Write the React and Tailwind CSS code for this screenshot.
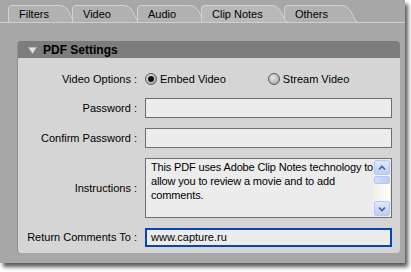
import React from 'react';

const tabs = [
  { label: 'Filters', left: 8, width: 68 },
  { label: 'Video', left: 72, width: 68 },
  { label: 'Audio', left: 137, width: 69 },
  { label: 'Clip Notes', left: 201, width: 87, active: true },
  { label: 'Others', left: 284, width: 74 },
];

function Tab({ label, width, active }) {
  const h = 17;
  const d = `M0.5,${h} L0.5,4 Q0.5,0.5 4,0.5 L${width - 16},0.5 Q${width - 11},0.5 ${width - 8},5 L${width - 3},${h - 2} Q${width - 1.5},${h} ${width},${h}`;
  return (
    <div className="relative h-[17px] shrink-0" style={{ width }}>
      <svg className="absolute inset-0" width={width} height={h + 1}>
        <path d={d + ` L0.5,${h} Z`} fill={active ? '#b9b9b9' : '#b1b1b1'} stroke="none" />
        <path d={d} fill="none" stroke="#d2d2d2" strokeWidth="1" />
      </svg>
      <span className="relative block pl-[11px] pt-[2px] text-[11px] leading-[14px] text-black">{label}</span>
    </div>
  );
}

function Radio({ checked }) {
  return (
    <span className="w-[12px] h-[12px] rounded-full border border-[#5a5a5a] bg-[radial-gradient(circle_at_40%_35%,#e8e8e8,#9a9a9a)] flex items-center justify-center">
      {checked && <span className="w-[6px] h-[6px] rounded-full bg-[#111]" />}
    </span>
  );
}

function Field({ label, children, className = '' }) {
  return (
    <div className={`flex items-center ${className}`}>
      <div className="w-[120px] text-right pr-[1px] text-[11px] text-black">{label}</div>
      <div className="ml-[7px] w-[247px] flex items-center">{children}</div>
    </div>
  );
}

export default function App() {
  return (
    <div className="w-[411px] h-[272px] bg-white" style={{ fontFamily: '"Liberation Sans", Arial, sans-serif' }}>
      <div className="relative w-[405px] h-[263px] bg-[#a7a7a7] shadow-[3px_4px_4px_rgba(0,0,0,0.65)]">
        <div className="relative h-[22px] pt-[5px]">
          {tabs.filter(t => !t.active).map(t => (
            <div key={t.label} className="absolute top-[5px]" style={{ left: t.left }}>
              <Tab {...t} />
            </div>
          ))}
          {tabs.filter(t => t.active).map(t => (
            <div key={t.label} className="absolute top-[5px]" style={{ left: t.left }}>
              <Tab {...t} />
            </div>
          ))}
        </div>
        <div className="h-px bg-[#cfcfcf]" />

        <div className="ml-[17px] mr-[5px] mt-[18px] rounded-[4px] overflow-hidden border-l border-[#8f8f8f]">
          <div className="h-[17px] bg-[#7d7d7d] flex items-center pl-[10px]">
            <svg width="9" height="7" viewBox="0 0 9 7" className="mr-[6px] mt-[1px]">
              <path d="M0.5,0.5 L8.5,0.5 L4.5,6.5 Z" fill="#e4e4e4" stroke="#bdbdbd" strokeWidth="0.6" strokeLinejoin="round" />
            </svg>
            <span className="text-[12px] font-bold text-black">PDF Settings</span>
          </div>
          <div className="bg-[#d5d5d5] pt-[11px] pb-[6px] flex flex-col">
            <Field label="Video Options :" className="h-[20px]">
              <div className="flex items-center">
                <Radio checked />
                <span className="ml-[3px] text-[11px] text-black">Embed Video</span>
              </div>
              <div className="flex items-center ml-[42px]">
                <Radio />
                <span className="ml-[3px] text-[11px] text-black">Stream Video</span>
              </div>
            </Field>
            <Field label="Password :" className="mt-[9px]">
              <div className="w-full h-[20px] border border-[#6e6e6e] bg-[#ececec]" />
            </Field>
            <Field label="Confirm Password :" className="mt-[10px]">
              <div className="w-full h-[20px] border border-[#6e6e6e] bg-[#ececec]" />
            </Field>
            <Field label="Instructions :" className="mt-[10px]">
              <div className="w-full h-[60px] border border-[#6e6e6e] bg-[#ececec] flex">
                <div className="flex-1 overflow-hidden pl-[5px] pt-[1px] text-[11px] leading-[14px] tracking-[-0.15px] text-black whitespace-nowrap">
                  This PDF uses Adobe Clip Notes technology to<br />
                  allow you to review a movie and to add<br />
                  comments.
                </div>
                <div className="w-[16px] flex flex-col mr-[1px] my-[1px] bg-[linear-gradient(to_right,#f3f1ec,#fdfdfb)]">
                  <div className="h-[15px] rounded-[2px] border border-[#b7c8f0] bg-[linear-gradient(to_bottom,#dfe8fd,#bccdf6)] flex items-center justify-center">
                    <svg width="8" height="6" viewBox="0 0 8 6"><path d="M1,4.5 L4,1.5 L7,4.5" fill="none" stroke="#4d6185" strokeWidth="1.6" /></svg>
                  </div>
                  <div className="h-[8px] mt-px rounded-[2px] border border-[#b7c8f0] bg-[linear-gradient(to_right,#cfdcfb,#bccdf6)]" />
                  <div className="flex-1" />
                  <div className="h-[15px] rounded-[2px] border border-[#b7c8f0] bg-[linear-gradient(to_bottom,#dfe8fd,#bccdf6)] flex items-center justify-center">
                    <svg width="8" height="6" viewBox="0 0 8 6"><path d="M1,1.5 L4,4.5 L7,1.5" fill="none" stroke="#4d6185" strokeWidth="1.6" /></svg>
                  </div>
                </div>
              </div>
            </Field>
            <Field label="Return Comments To :" className="mt-[10px]">
              <div className="w-full h-[19px] border-2 border-[#0a45b8] bg-[#ececec] pl-[4px] text-[11px] leading-[15px] text-black">
                www.capture.ru
              </div>
            </Field>
          </div>
        </div>
      </div>
    </div>
  );
}
